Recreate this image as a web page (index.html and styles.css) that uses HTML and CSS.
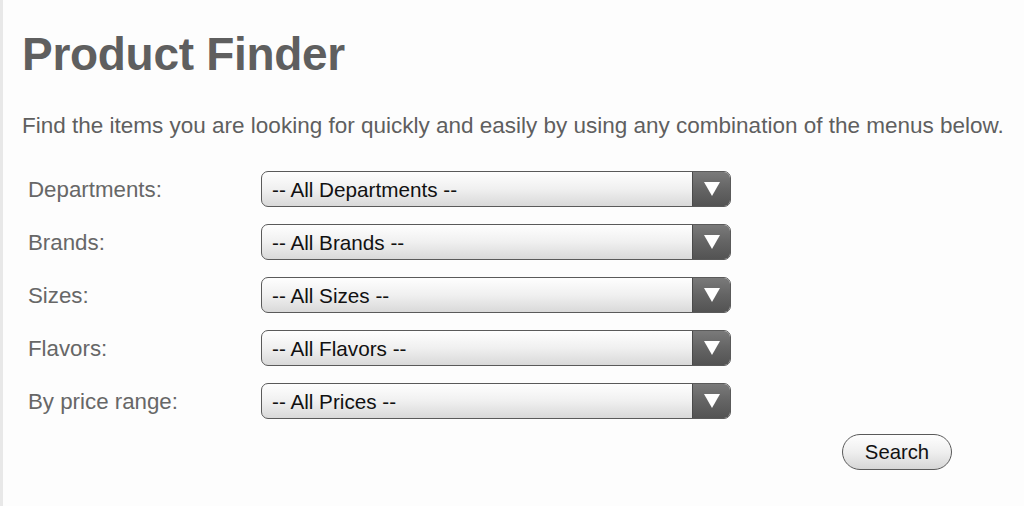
FILE: index.html
```html
<!DOCTYPE html>
<html lang="en">
<head>
    <meta charset="UTF-8">
    <title>Product Finder</title>
    <link rel="stylesheet" href="styles.css">
</head>
<body>

    <!-- Product Finder -->
    <div class="page">
        <h1>Product Finder</h1>
        <p class="intro">Find the items you are looking for quickly and easily by using any combination of the menus below.</p>

        <form class="finder">
            <label for="dept">Departments:</label>
            <div class="select-wrap">
                <select id="dept"><option>-- All Departments --</option></select>
                <span class="arrow"><svg width="16" height="14" viewBox="0 0 16 14"><path d="M0 0 H16 L8 14 Z" fill="#fff"/></svg></span>
            </div>

            <label for="brand">Brands:</label>
            <div class="select-wrap">
                <select id="brand"><option>-- All Brands --</option></select>
                <span class="arrow"><svg width="16" height="14" viewBox="0 0 16 14"><path d="M0 0 H16 L8 14 Z" fill="#fff"/></svg></span>
            </div>

            <label for="size">Sizes:</label>
            <div class="select-wrap">
                <select id="size"><option>-- All Sizes --</option></select>
                <span class="arrow"><svg width="16" height="14" viewBox="0 0 16 14"><path d="M0 0 H16 L8 14 Z" fill="#fff"/></svg></span>
            </div>

            <label for="flavor">Flavors:</label>
            <div class="select-wrap">
                <select id="flavor"><option>-- All Flavors --</option></select>
                <span class="arrow"><svg width="16" height="14" viewBox="0 0 16 14"><path d="M0 0 H16 L8 14 Z" fill="#fff"/></svg></span>
            </div>

            <label for="price">By price range:</label>
            <div class="select-wrap">
                <select id="price"><option>-- All Prices --</option></select>
                <span class="arrow"><svg width="16" height="14" viewBox="0 0 16 14"><path d="M0 0 H16 L8 14 Z" fill="#fff"/></svg></span>
            </div>

            <div class="actions">
                <button type="submit">Search</button>
            </div>
        </form>
    </div>

</body>
</html>
```

FILE: styles.css
```css
* {
    margin: 0;
    padding: 0;
    box-sizing: border-box;
    font-family: 'Liberation Sans', Arial, sans-serif;
}

body {
    background: #fdfdfd;
    color: #636363;
    min-height: 100vh;
}

.page {
    min-height: 506px;
    border-left: 3px solid #e8e8e8;
    padding: 31px 0 0 19px;
}

h1 {
    font-size: 46px;
    line-height: 1;
    font-weight: bold;
    color: #5f5f5f;
    letter-spacing: -0.3px;
}

.intro {
    font-size: 22.5px;
    line-height: 26px;
    margin-top: 36px;
    color: #5f5f5f;
}

.finder {
    display: grid;
    grid-template-columns: 233px 470px;
    row-gap: 17px;
    align-items: center;
    margin-top: 32px;
    padding-left: 6px;
}

.finder label {
    font-size: 22.3px;
    line-height: 26px;
    padding-top: 2px;
    color: #676767;
}

.select-wrap {
    position: relative;
    height: 36px;
    border: 1.5px solid #5a5a5a;
    border-radius: 7px;
    overflow: hidden;
    background: linear-gradient(#fefefe, #f0f0f0 50%, #d9d9d9);
}

.select-wrap select {
    appearance: none;
    -webkit-appearance: none;
    border: none;
    background: transparent;
    width: 100%;
    height: 100%;
    padding: 0 44px 0 10px;
    font-size: 20.7px;
    color: #111;
    outline: none;
}

.arrow {
    position: absolute;
    top: 0;
    right: 0;
    width: 38px;
    height: 100%;
    display: flex;
    align-items: center;
    justify-content: center;
    background: linear-gradient(#7a7a7a, #646464 50%, #535353);
    border-left: 1px solid #4a4a4a;
    pointer-events: none;
}

.actions {
    grid-column: 1 / span 2;
    display: flex;
    justify-content: flex-end;
    margin-right: -221px;
    margin-top: -2px;
}

button {
    width: 110px;
    height: 36px;
    border: 1.5px solid #5a5a5a;
    border-radius: 18px;
    background: linear-gradient(#fefefe, #efefef 50%, #d6d6d6);
    font-size: 20.3px;
    color: #111;
    cursor: pointer;
}
```
